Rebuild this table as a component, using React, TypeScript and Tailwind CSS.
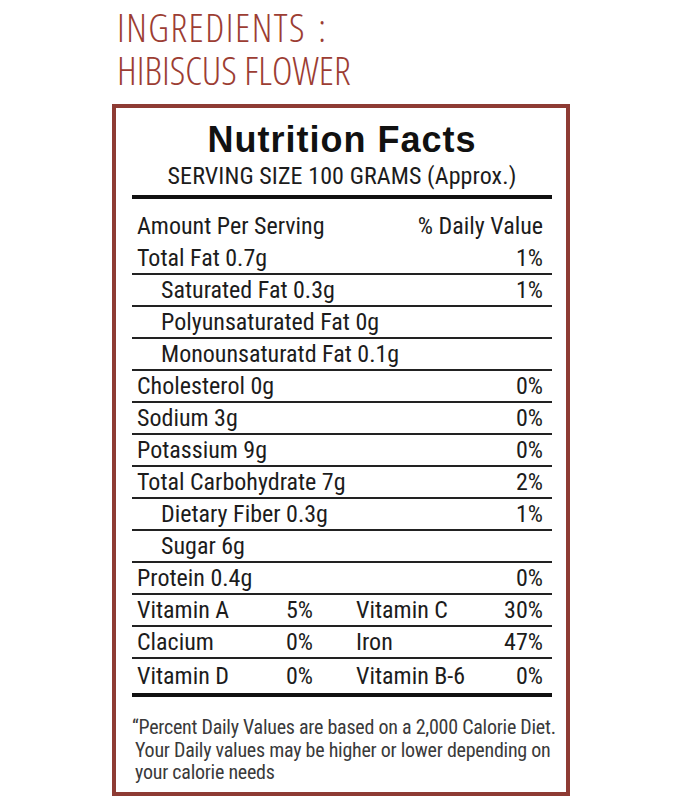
import React from 'react';

type Row = { label: string; pct?: string; indent?: boolean };

const rows: Row[] = [
  { label: 'Total Fat 0.7g', pct: '1%' },
  { label: 'Saturated Fat 0.3g', pct: '1%', indent: true },
  { label: 'Polyunsaturated Fat 0g', indent: true },
  { label: 'Monounsaturatd Fat 0.1g', indent: true },
  { label: 'Cholesterol 0g', pct: '0%' },
  { label: 'Sodium 3g', pct: '0%' },
  { label: 'Potassium 9g', pct: '0%' },
  { label: 'Total Carbohydrate 7g', pct: '2%' },
  { label: 'Dietary Fiber 0.3g', pct: '1%', indent: true },
  { label: 'Sugar 6g', indent: true },
  { label: 'Protein 0.4g', pct: '0%' },
];

const vitamins = [
  ['Vitamin A', '5%', 'Vitamin C', '30%'],
  ['Clacium', '0%', 'Iron', '47%'],
  ['Vitamin D', '0%', 'Vitamin B-6', '0%'],
];

const App = () => {
  return (
    <div className="w-[683px] h-[800px] bg-white text-[#1c1c1c] font-['Roboto',sans-serif] [font-stretch:75%]">
      {/* Ingredients heading */}
      <div className="pt-[5px] pl-[117px] font-['Open_Sans',sans-serif] font-light text-[39px] leading-[43px] text-[#9c3d33]">
        <div>
          <span className="tracking-[1.5px]">INGREDIENTS</span>
          <span className="ml-[12px]">:</span>
        </div>
        <div>HIBISCUS FLOWER</div>
      </div>

      {/* Label box */}
      <div className="mt-[13px] ml-[112px] w-[458px] border-4 border-[#8e3b34] pl-[16px] pr-[14px] pt-[14px] pb-[8px]">
        <h1 className="text-center font-['Liberation_Sans',Arial,sans-serif] [font-stretch:100%] text-[36px] leading-[36px] font-bold tracking-[1px] text-[#111]">
          Nutrition Facts
        </h1>
        <div className="mt-[5px] text-center text-[24px] leading-[26px] tracking-[0.1px]">SERVING SIZE 100 GRAMS (Approx.)</div>
        <div className="mt-[6px] h-[4px] bg-[#111]" />

        <div className="mt-[12px] flex h-[32px] justify-between pl-[5px] pr-[9px] text-[24px] leading-[30px]">
          <span>Amount Per Serving</span>
          <span>% Daily Value</span>
        </div>

        {rows.map((r) => (
          <div
            key={r.label}
            className="flex h-[32px] justify-between border-b-2 border-[#222] pr-[9px] text-[24px] leading-[30px]"
          >
            <span className={r.indent ? 'pl-[29px]' : 'pl-[5px]'}>{r.label}</span>
            {r.pct && <span>{r.pct}</span>}
          </div>
        ))}

        {vitamins.map((v, i) => (
          <div
            key={v[0]}
            className={
              i === vitamins.length - 1
                ? 'flex h-[38px] items-start border-b-4 border-[#111] pt-[2px] pl-[5px] pr-[9px] text-[24px] leading-[30px]'
                : 'flex h-[32px] border-b-2 border-[#222] pl-[5px] pr-[9px] text-[24px] leading-[30px]'
            }
          >
            <span className="w-[140px]">{v[0]}</span>
            <span className="w-[36px] text-right">{v[1]}</span>
            <span className="ml-[43px] flex-1">{v[2]}</span>
            <span>{v[3]}</span>
          </div>
        ))}

        <p className="mt-[19px] whitespace-nowrap text-[20px] leading-[22.5px] tracking-[-0.25px] text-[#3a3a3a] pl-[3px] -indent-[3px]">
          “Percent Daily Values are based on a 2,000 Calorie Diet.
          <br />
          Your Daily values may be higher or lower depending on
          <br />
          your calorie needs
        </p>
      </div>
    </div>
  );
};

export default App;
